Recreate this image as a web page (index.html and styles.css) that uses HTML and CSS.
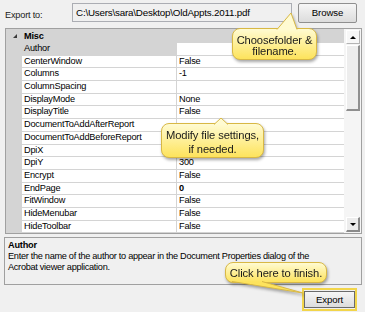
FILE: index.html
```html
<!DOCTYPE html>
<html lang="en">
<head>
    <meta charset="UTF-8">
    <title>Export to PDF</title>
    <link rel="stylesheet" href="styles.css">
</head>
<body>
    <div class="dialog">
        <div class="export-row">
            <span class="export-label">Export to:</span>
            <div class="path-field">C:\Users\sara\Desktop\OldAppts.2011.pdf</div>
            <button class="btn browse-btn">Browse</button>
        </div>

        <div class="grid">
            <div class="grid-rows">
                <div class="category"><span class="toggle"><i></i></span><span class="cat-name">Misc</span></div>
                <div class="prop selected"><span></span><span class="name">Author</span><span class="value"></span></div>
                <div class="prop"><span></span><span class="name">CenterWindow</span><span class="value">False</span></div>
                <div class="prop"><span></span><span class="name">Columns</span><span class="value">-1</span></div>
                <div class="prop"><span></span><span class="name">ColumnSpacing</span><span class="value"></span></div>
                <div class="prop"><span></span><span class="name">DisplayMode</span><span class="value">None</span></div>
                <div class="prop"><span></span><span class="name">DisplayTitle</span><span class="value">False</span></div>
                <div class="prop"><span></span><span class="name">DocumentToAddAfterReport</span><span class="value"></span></div>
                <div class="prop"><span></span><span class="name">DocumentToAddBeforeReport</span><span class="value"></span></div>
                <div class="prop"><span></span><span class="name">DpiX</span><span class="value">300</span></div>
                <div class="prop"><span></span><span class="name">DpiY</span><span class="value">300</span></div>
                <div class="prop"><span></span><span class="name">Encrypt</span><span class="value">False</span></div>
                <div class="prop"><span></span><span class="name">EndPage</span><span class="value bold">0</span></div>
                <div class="prop"><span></span><span class="name">FitWindow</span><span class="value">False</span></div>
                <div class="prop"><span></span><span class="name">HideMenubar</span><span class="value">False</span></div>
                <div class="prop"><span></span><span class="name">HideToolbar</span><span class="value">False</span></div>
            </div>
            <div class="scrollbar">
                <div class="sb-btn"><i class="arrow-up"></i></div>
                <div class="sb-track"><div class="sb-thumb"></div></div>
                <div class="sb-btn sb-down"><i class="arrow-down"></i></div>
            </div>
        </div>

        <div class="desc">
            <div class="desc-title">Author</div>
            <div class="desc-text">Enter the name of the author to appear in the Document Properties dialog of the<br>Acrobat viewer application.</div>
        </div>

        <div class="footer">
            <div class="export-frame"><button class="btn export-btn">Export</button></div>
        </div>

        <div class="callout callout-folder">
            <div class="callout-box"><span>Choosefolder &amp;</span><span>filename.</span></div>
            <svg class="tail" width="26" height="18" viewBox="0 0 26 18">
                <polygon points="2,17.5 16,1 22,17.5" fill="#fffbd2"/>
                <polyline points="2,17.5 16,1 22,17.5" fill="none" stroke="#d8b845" stroke-width="1"/>
            </svg>
        </div>

        <div class="callout callout-settings">
            <div class="callout-box"><span>Modify file settings,</span><span>if needed.</span></div>
            <svg class="tail" width="18" height="8" viewBox="0 0 18 8">
                <polygon points="2,7.5 9,1 16,7.5" fill="#fffbd2"/>
                <polyline points="2,7.5 9,1 16,7.5" fill="none" stroke="#d8b845" stroke-width="1"/>
            </svg>
        </div>

        <div class="callout callout-finish">
            <div class="callout-box"><span>Click here to finish.</span></div>
            <svg class="tail" width="76" height="15" viewBox="0 0 76 15">
                <polygon points="2,1.5 73,13 32,1.5" fill="#fde35c"/>
                <polyline points="2,1.5 73,13 32,1.5" fill="none" stroke="#d8b845" stroke-width="1"/>
            </svg>
        </div>
    </div>
</body>
</html>
```

FILE: styles.css
```css
:root {
    --face: #f0f0f0;
    --line: #d4d4d4;
    --border: #a0a0a0;
    --note-top: #fffbd2;
    --note-bottom: #fde35c;
    --note-edge: #d8b845;
}

body {
    margin: 0;
    background-color: var(--face);
    font-family: "Liberation Sans", Arial, sans-serif;
    font-size: 9.2px;
    letter-spacing: -0.2px;
    color: #000;
}
.dialog {
    position: relative;
    width: 365px;
    height: 312px;
    overflow: hidden;
}

/* top row */
.export-row {
    display: flex;
    align-items: center;
    height: 19px;
    padding: 3px 0 0 5px;
}
.export-label {
    width: 67px;
    padding-top: 5px;
    color: #222;
}
.path-field {
    width: 220px;
    height: 19px;
    box-sizing: border-box;
    border: 1px solid #abadb3;
    background-color: var(--face);
    padding: 0 3px;
    line-height: 17px;
    font-size: 9.8px;
    white-space: nowrap;
}
.btn {
    font-family: inherit;
    font-size: 9.6px;
    letter-spacing: -0.1px;
    color: #000;
    border: 1px solid #8f8f8f;
    border-radius: 2px;
    background: linear-gradient(#f6f6f6, #dcdcdc);
    padding: 0;
}
.browse-btn {
    margin-left: 6px;
    width: 59px;
    height: 20px;
}

/* property grid */
.grid {
    display: flex;
    margin: 6px 0 0 5px;
    width: 357px;
    height: 206px;
    box-sizing: border-box;
    border: 1px solid var(--border);
}
.grid-rows {
    flex: 1;
    background-color: var(--line);
    overflow: hidden;
}
.category {
    display: flex;
    align-items: center;
    height: 13px;
    font-weight: bold;
}
.toggle {
    width: 18px;
    display: flex;
    justify-content: center;
}
.toggle i {
    width: 0;
    height: 0;
    border-left: 4px solid transparent;
    border-bottom: 4px solid #3a3a3a;
}
.prop {
    display: grid;
    grid-template-columns: 15px 154px 1fr;
    column-gap: 1px;
    height: 11.7px;
    margin-top: 1px;
    line-height: 11.7px;
}
.prop .name,
.prop .value {
    background-color: #fff;
    white-space: nowrap;
    overflow: hidden;
    padding-left: 2px;
}
.prop.selected .name {
    background-color: var(--line);
}
.bold {
    font-weight: bold;
}

/* scrollbar */
.scrollbar {
    width: 17px;
    display: flex;
    flex-direction: column;
    box-sizing: border-box;
    padding: 1px 1px 1px 2px;
    background-color: #f5f5f5;
}
.sb-btn {
    height: 12px;
    display: flex;
    align-items: center;
    justify-content: center;
    background-color: #f7f7f7;
    border: 1px solid #fff;
    border-right-color: #b4b4b4;
    border-bottom-color: #b4b4b4;
}
.sb-down {
    border-right: 2px solid #8a8a8a;
    border-bottom: 2px solid #8a8a8a;
    background-color: #ececec;
}
.arrow-up,
.arrow-down {
    width: 0;
    height: 0;
    border-left: 3px solid transparent;
    border-right: 3px solid transparent;
}
.arrow-up {
    border-bottom: 3px solid #000;
}
.arrow-down {
    border-top: 3px solid #000;
}
.sb-track {
    flex: 1;
    padding-top: 1px;
}
.sb-thumb {
    height: 66px;
    box-sizing: border-box;
    background-color: #ededed;
    border: 1px solid #fff;
    border-right: 2px solid #8f8f8f;
    border-bottom: 2px solid #8f8f8f;
}

/* description */
.desc {
    margin: 3px 0 0 4px;
    width: 358px;
    height: 48px;
    box-sizing: border-box;
    border: 1px solid var(--border);
    padding: 2px 3px;
}
.desc-title {
    font-weight: bold;
    line-height: 11px;
}
.desc-text {
    line-height: 10.5px;
    letter-spacing: -0.3px;
}

/* footer */
.footer {
    display: flex;
    justify-content: flex-end;
    padding: 3px 8px 0 0;
}
.export-frame {
    border: 2px solid #f2d54a;
    padding: 1px 0;
}
.export-btn {
    width: 51px;
    height: 17px;
    border: 1px solid #6b6b6b;
    border-radius: 0;
}

/* yellow notes */
.callout {
    position: absolute;
    filter: drop-shadow(1px 2px 1.5px rgba(0, 0, 0, 0.35));
}
.callout-box {
    height: 100%;
    box-sizing: border-box;
    border: 1px solid var(--note-edge);
    border-radius: 8px;
    background: linear-gradient(var(--note-top), var(--note-bottom));
    display: flex;
    flex-direction: column;
    align-items: center;
    justify-content: center;
    font-size: 11.2px;
    letter-spacing: -0.1px;
    color: #1a1a1a;
    text-align: center;
}
.tail {
    position: absolute;
    overflow: visible;
}
.callout-folder {
    left: 232px;
    top: 28px;
    width: 85px;
    height: 32px;
}
.callout-folder .callout-box {
    line-height: 11px;
    padding-top: 3px;
}
.callout-folder .tail {
    left: 43px;
    top: -16px;
}
.callout-settings {
    left: 161px;
    top: 123px;
    width: 103px;
    height: 35px;
}
.callout-settings .callout-box {
    line-height: 14px;
    padding-top: 2px;
}
.callout-settings .tail {
    left: 51px;
    top: -6px;
}
.callout-finish {
    left: 225px;
    top: 262px;
    width: 102px;
    height: 21px;
}
.callout-finish .tail {
    left: 5px;
    top: 18px;
}
```
